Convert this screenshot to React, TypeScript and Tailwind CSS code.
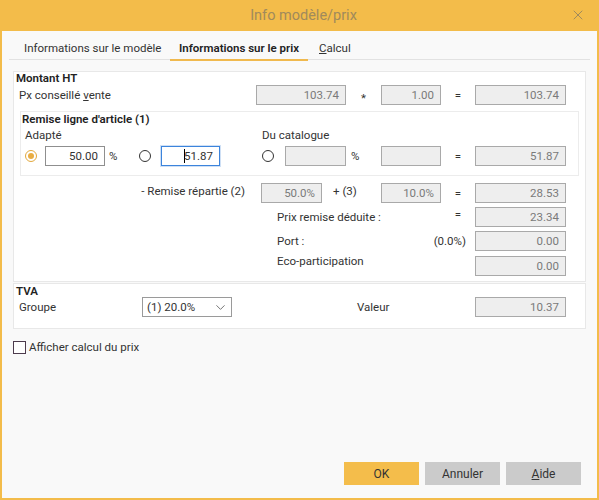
import { ChevronDown, X } from 'lucide-react'

const font = { fontFamily: 'Roboto, "Noto Sans", sans-serif' }

function Field({ value, w, editable }: { value: string; w: string; editable?: boolean }) {
  return (
    <div
      className={`${w} flex h-[20px] shrink-0 items-center justify-end border px-[6px] ${
        editable ? 'border-[#8f8f8f] bg-white text-[#333]' : 'border-[#a9a9a9] bg-[#eeeeee] text-[#7a7a7a]'
      }`}
    >
      {value}
    </div>
  )
}

function Radio({ checked }: { checked?: boolean }) {
  return (
    <span
      className={`flex h-[12px] w-[12px] shrink-0 items-center justify-center rounded-full border ${
        checked ? 'border-[#e2a83c]' : 'border-[#333]'
      } bg-white`}
    >
      {checked && <span className="h-[6px] w-[6px] rounded-full bg-[#e9ad42]" />}
    </span>
  )
}

function Eq({ w = 'w-[34px]', top }: { w?: string; top?: boolean }) {
  return <span className={`${w} shrink-0 ${top ? 'self-start' : ''} text-center text-[#333]`}>=</span>
}

export default function App() {
  return (
    <div
      className="flex h-[500px] w-[599px] flex-col border-x-[2px] border-b-[2px] border-[#f3bc4a] bg-[#f9f9f9] text-[11.5px] leading-[14px] text-[#333]"
      style={font}
    >
      {/* title bar */}
      <div className="relative flex h-[31px] shrink-0 items-center justify-center bg-[#f3bc4a]">
        <span className="pl-[8px] text-[14.5px] leading-[18px] text-[#a08a5c]">Info modèle/prix</span>
        <X className="absolute right-[11px] top-[7px] h-[16px] w-[16px] text-[#8c7e62]" strokeWidth={1.2} />
      </div>

      {/* tabs */}
      <div className="mx-[7px] mt-[8px] flex h-[21px] items-start border-b border-[#e2e2e2] pt-[2px]">
        <span className="w-[161px] pl-[15px]">Informations sur le modèle</span>
        <span className="-mb-px h-[20px] w-[138px] border-b-[2px] border-[#f0b94e] text-center font-semibold text-[#222]">
          Informations sur le prix
        </span>
        <span className="pl-[11px]">
          <span className="underline">C</span>alcul
        </span>
      </div>

      {/* Montant HT */}
      <div className="mx-[11px] mt-[11px] flex h-[211px] flex-col border border-[#e8e8e8] bg-white">
        <div className="h-[13px] pl-[2px] leading-[13px] font-semibold text-[#222]">Montant HT</div>
        <div className="flex h-[20px] items-center">
          <span className="w-[242px] shrink-0 pl-[5px]">
            Px conseillé <span className="underline">v</span>ente
          </span>
          <Field value="103.74" w="w-[90px]" />
          <span className="w-[35px] shrink-0 pt-[5px] text-center">*</span>
          <Field value="1.00" w="w-[60px]" />
          <Eq />
          <Field value="103.74" w="w-[91px]" />
        </div>

        {/* remise ligne */}
        <div className="mx-[6px] mt-[6px] flex h-[65px] flex-col border border-[#ececec] bg-white">
          <div className="h-[14px] pl-[1px] font-semibold text-[#222]">Remise ligne d'article (1)</div>
          <div className="mt-[2px] flex">
            <span className="w-[241px] shrink-0 pl-[4px]">Adapté</span>
            <span>Du catalogue</span>
          </div>
          <div className="mt-[4px] flex h-[20px] items-center">
            <span className="ml-[4px] flex">
              <Radio checked />
            </span>
            <span className="ml-[8px]">
              <Field value="50.00" w="w-[60px]" editable />
            </span>
            <span className="w-[34px] shrink-0 pl-[4px]">%</span>
            <Radio />
            <div className="ml-[10px] flex h-[20px] w-[59px] shrink-0 items-center justify-end border border-[#3c84dc] bg-white px-[6px] text-[#333] shadow-[0_0_0_1px_#cfe0f5]">
              <span className="mr-[-1px] h-[14px] w-px bg-black" />
              51.87
            </div>
            <span className="ml-[42px] flex">
              <Radio />
            </span>
            <span className="ml-[11px]">
              <Field value="" w="w-[61px]" />
            </span>
            <span className="w-[35px] shrink-0 pl-[5px]">%</span>
            <Field value="" w="w-[60px]" />
            <Eq />
            <Field value="51.87" w="w-[91px]" />
          </div>
        </div>

        <div className="mt-[7px] flex h-[20px] items-center">
          <span className="w-[231px] shrink-0 self-start pt-[1px] text-right">- Remise répartie (2)</span>
          <span className="ml-[16px]">
            <Field value="50.0%" w="w-[61px]" />
          </span>
          <span className="w-[59px] shrink-0 self-start pt-[1px] pl-[11px]">+ (3)</span>
          <Field value="10.0%" w="w-[60px]" />
          <Eq />
          <Field value="28.53" w="w-[91px]" />
        </div>
        <div className="mt-[4px] flex h-[20px] items-center">
          <span className="ml-[263px] w-[164px] shrink-0">Prix remise déduite :</span>
          <Eq top />
          <Field value="23.34" w="w-[91px]" />
        </div>
        <div className="mt-[4px] flex h-[20px] items-center">
          <span className="ml-[263px] w-[100px] shrink-0">Port :</span>
          <span className="w-[98px] shrink-0 pr-[9px] text-right">(0.0%)</span>
          <Field value="0.00" w="w-[91px]" />
        </div>
        <div className="mt-[5px] flex h-[20px] items-start">
          <span className="-mt-[2px] ml-[263px] w-[198px] shrink-0">Eco-participation</span>
          <Field value="0.00" w="w-[91px]" />
        </div>
      </div>

      {/* TVA */}
      <div className="mx-[11px] mt-[1px] flex h-[46px] flex-col border border-[#e8e8e8] bg-white">
        <div className="h-[13px] pl-[2px] leading-[15px] font-semibold text-[#222]">TVA</div>
        <div className="flex h-[20px] items-center">
          <span className="w-[128px] shrink-0 pl-[5px]">Groupe</span>
          <div className="flex h-[20px] w-[90px] shrink-0 items-center justify-between border border-[#9a9a9a] bg-white pl-[4px] pr-[3px] text-[#333]">
            (1) 20.0%
            <ChevronDown className="h-[15px] w-[15px] text-[#555]" strokeWidth={1.3} />
          </div>
          <span className="ml-[125px] w-[118px] shrink-0">Valeur</span>
          <Field value="10.37" w="w-[91px]" />
        </div>
      </div>

      {/* checkbox */}
      <label className="ml-[11px] mt-[11px] flex items-center gap-[3px]">
        <span className="h-[13px] w-[13px] border border-[#4d3b4d] bg-white" />
        <span>Afficher calcul du prix</span>
      </label>

      <div className="flex-1" />

      {/* buttons */}
      <div className="mb-[13px] flex justify-end gap-[6px] pr-[16px]">
        <button className="h-[23px] w-[75px] bg-[#f4bd4b] text-[12px] text-[#333]">OK</button>
        <button className="h-[23px] w-[75px] bg-[#cbcbcb] text-[12px] text-[#333]">Annuler</button>
        <button className="h-[23px] w-[75px] bg-[#cbcbcb] text-[12px] text-[#333]">
          <span className="underline">A</span>ide
        </button>
      </div>
    </div>
  )
}
